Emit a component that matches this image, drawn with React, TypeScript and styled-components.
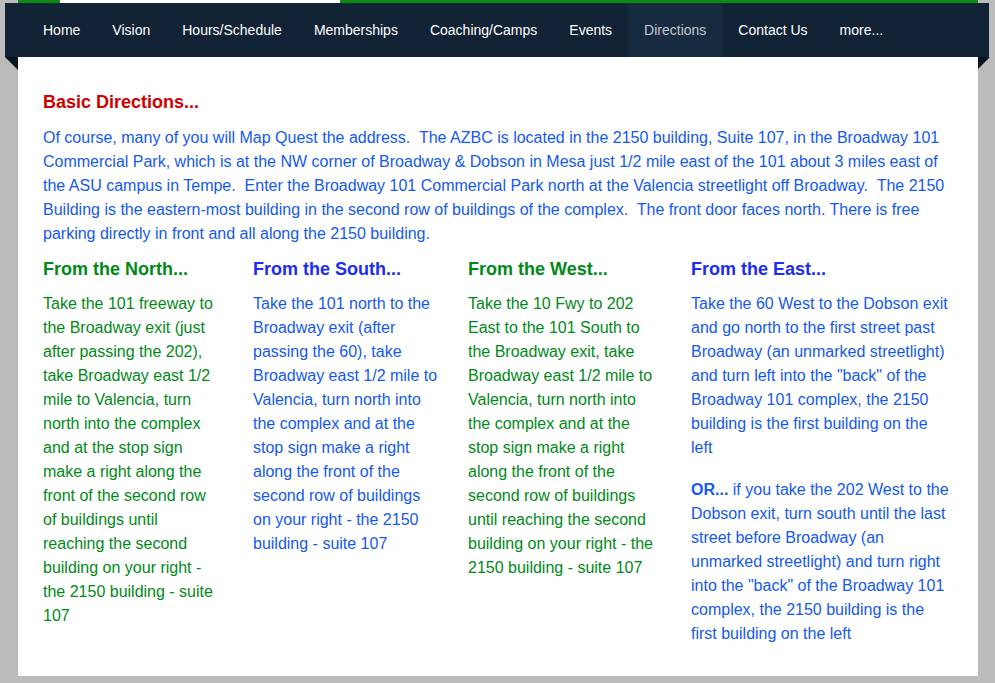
import React from "react";
import styled, { createGlobalStyle } from "styled-components";

const GlobalStyle = createGlobalStyle`
  html, body { margin: 0; padding: 0; background: #bbbbbb; }
  body { font-family: "Liberation Sans", Arial, Helvetica, sans-serif; }
`;

const Page = styled.div`
  width: 995px;
  min-height: 683px;
  background: #bbbbbb;
  padding-bottom: 7px;
  box-sizing: border-box;
`;

const TopStrip = styled.div`
  display: flex;
  height: 3px;
  margin: 0 17px 0 18px;
`;

const StripPart = styled.div<{ $color: string; $w?: number }>`
  background: ${(p) => p.$color};
  ${(p) => (p.$w ? `width: ${p.$w}px;` : "flex: 1;")}
`;

const NavBar = styled.nav`
  display: flex;
  align-items: stretch;
  height: 54px;
  margin: 0 6px 0 5px;
  padding-left: 22px;
  background: #122336;
`;

const NavItem = styled.a<{ $active?: boolean }>`
  display: flex;
  align-items: center;
  padding: 0 16px;
  font-size: 14px;
  color: ${(p) => (p.$active ? "#c3c7cc" : "#ffffff")};
  background: ${(p) => (p.$active ? "#172b40" : "transparent")};
  text-decoration: none;
  white-space: nowrap;
`;

const Panel = styled.main`
  position: relative;
  margin: 0 17px 0 18px;
  background: #ffffff;
  padding: 33px 25px 30px 25px;
`;

const Fold = styled.div<{ $side: "left" | "right" }>`
  position: absolute;
  top: 0;
  width: ${(p) => (p.$side === "left" ? 13 : 12)}px;
  height: ${(p) => (p.$side === "left" ? 13 : 12)}px;
  background: #08141f;
  ${(p) =>
    p.$side === "left"
      ? "left: -13px; clip-path: polygon(0 0, 100% 0, 100% 100%);"
      : "right: -12px; clip-path: polygon(0 0, 100% 0, 0 100%);"}
`;

const Title = styled.h2`
  margin: 0 0 12px;
  font-size: 18px;
  line-height: 24px;
  font-weight: bold;
  color: #cc0000;
`;

const Intro = styled.p`
  margin: 0 0 11px;
  font-size: 16px;
  line-height: 24px;
  color: #1459f0;
`;

const Columns = styled.div`
  display: grid;
  grid-template-columns: 210px 215px 223px 1fr;
`;

const Column = styled.section<{ $pr: number }>`
  padding-right: ${(p) => p.$pr}px;
`;

const ColTitle = styled.h3<{ $color: string }>`
  margin: 0 0 11px;
  font-size: 18px;
  line-height: 24px;
  font-weight: bold;
  color: ${(p) => p.$color};
`;

const ColText = styled.p<{ $color: string }>`
  margin: 0 0 18px;
  font-size: 16px;
  line-height: 24px;
  color: ${(p) => p.$color};
  &:last-child { margin-bottom: 0; }
`;

const GREEN = "#008a17";
const BLUE = "#1459f0";
const HEAD_BLUE = "#1c2cf0";

const navItems = [
  "Home",
  "Vision",
  "Hours/Schedule",
  "Memberships",
  "Coaching/Camps",
  "Events",
  "Directions",
  "Contact Us",
  "more...",
];

const S = "\u00a0 ";

export default function App() {
  return (
    <Page>
      <GlobalStyle />
      <TopStrip>
        <StripPart $color="#0b8a12" $w={42} />
        <StripPart $color="#ffffff" $w={280} />
        <StripPart $color="#0b8a12" />
      </TopStrip>
      <NavBar>
        {navItems.map((n) => (
          <NavItem key={n} href="#" $active={n === "Directions"}>
            {n}
          </NavItem>
        ))}
      </NavBar>
      <Panel>
        <Fold $side="left" />
        <Fold $side="right" />
        <Title>Basic Directions...</Title>
        <Intro>
          Of course, many of you will Map Quest the address.{S}The AZBC is located in the 2150
          building, Suite 107, in the Broadway 101 Commercial Park, which is at the NW corner of
          Broadway &amp; Dobson in Mesa just 1/2 mile east of the 101 about 3 miles east of the ASU
          campus in Tempe.{S}Enter the Broadway 101 Commercial Park north at the Valencia
          streetlight off Broadway.{S}The 2150 Building is the eastern-most building in the second
          row of buildings of the complex.{S}The front door faces north. There is free parking
          directly in front and all along the 2150 building.
        </Intro>
        <Columns>
          <Column $pr={34}>
            <ColTitle $color={GREEN}>From the North...</ColTitle>
            <ColText $color={GREEN}>
              Take the 101 freeway to the Broadway exit (just after passing the 202), take
              Broadway east 1/2 mile to Valencia, turn north into the complex and at the stop sign
              make a right along the front of the second row of buildings until reaching the
              second building on your right - the 2150 building - suite 107
            </ColText>
          </Column>
          <Column $pr={28}>
            <ColTitle $color={HEAD_BLUE}>From the South...</ColTitle>
            <ColText $color={BLUE}>
              Take the 101 north to the Broadway exit (after passing the 60), take Broadway east
              1/2 mile to Valencia, turn north into the complex and at the stop sign make a right
              along the front of the second row of buildings on your right - the 2150 building -
              suite 107
            </ColText>
          </Column>
          <Column $pr={33}>
            <ColTitle $color={GREEN}>From the West...</ColTitle>
            <ColText $color={GREEN}>
              Take the 10 Fwy to 202 East to the 101 South to the Broadway exit, take Broadway
              east 1/2 mile to Valencia, turn north into the complex and at the stop sign make a
              right along the front of the second row of buildings until reaching the second
              building on your right - the 2150 building - suite 107
            </ColText>
          </Column>
          <Column $pr={0}>
            <ColTitle $color={HEAD_BLUE}>From the East...</ColTitle>
            <ColText $color={BLUE}>
              Take the 60 West to the Dobson exit and go north to the first street past Broadway
              (an unmarked streetlight) and turn left into the "back" of the Broadway 101 complex,
              the 2150 building is the first building on the left
            </ColText>
            <ColText $color={BLUE}>
              <strong>OR...</strong> if you take the 202 West to the Dobson exit, turn south until
              the last street before Broadway (an unmarked streetlight) and turn right into the
              "back" of the Broadway 101 complex, the 2150 building is the first building on the
              left
            </ColText>
          </Column>
        </Columns>
      </Panel>
    </Page>
  );
}
